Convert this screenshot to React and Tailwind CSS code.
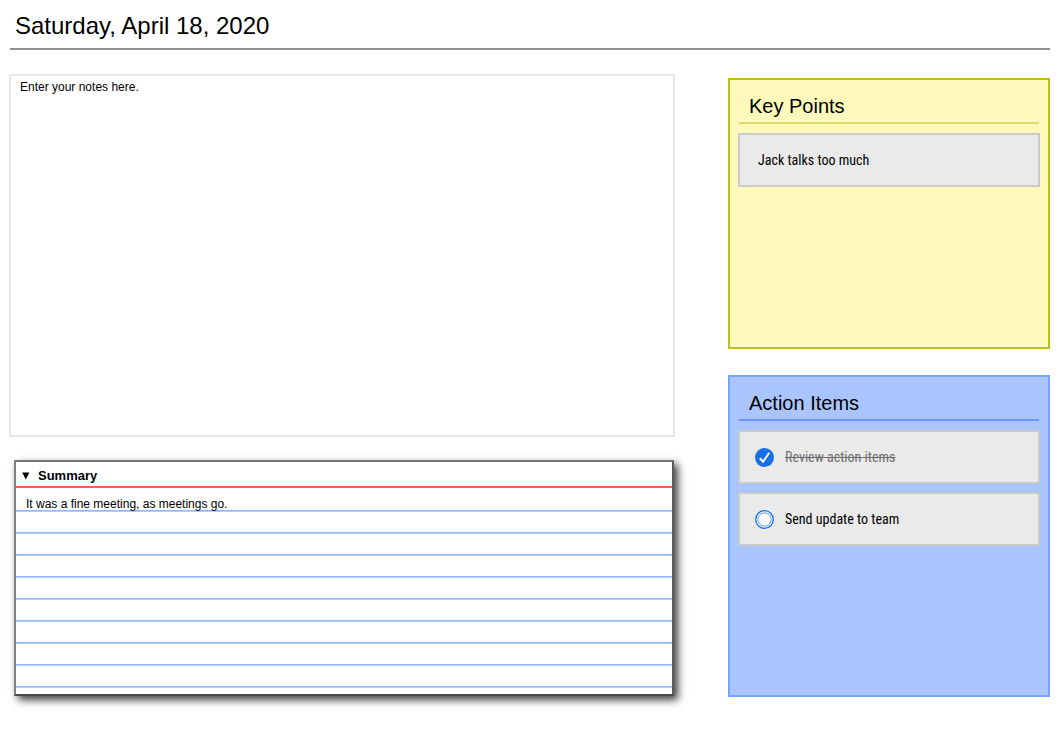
import { useState } from "react";

function Panel({ title, className, ruleClassName, children }) {
  return (
    <section className={`border-2 px-2 pt-[13px] ${className}`}>
      <h2 className={`mx-px border-b-2 pb-[3px] pl-[10px] text-[20px] leading-[26px] ${ruleClassName}`}>{title}</h2>
      <ul className="mt-[9px] flex flex-col gap-2">{children}</ul>
    </section>
  );
}

const itemClass =
  "flex h-[54px] items-center border-2 border-[#c9cacc] bg-[#eaeaea] font-['Roboto_Condensed','Open_Sans_Condensed',sans-serif] text-[14px] leading-[20px] font-normal";

function ActionItem({ id, text, initialDone }) {
  const [done, setDone] = useState(initialDone);
  return (
    <li className={`${itemClass} gap-[11px] pl-[15px]`}>
      <span className="grid size-[19px] shrink-0">
        <input
          id={id}
          type="checkbox"
          checked={done}
          onChange={(e) => setDone(e.target.checked)}
          className="col-start-1 row-start-1 size-[19px] appearance-none rounded-full"
        />
        <svg viewBox="0 0 19 19" className="pointer-events-none col-start-1 row-start-1 size-[19px]" aria-hidden="true">
          {done ? (
            <>
              <circle cx="9.5" cy="9.5" r="9.5" fill="#1670e4" />
              <path d="M4.8 10.2 8.1 13.7 14.2 4.8" fill="none" stroke="#fff" strokeWidth="2" />
            </>
          ) : (
            <>
              <circle cx="9.5" cy="9.5" r="8.8" fill="#fff" stroke="#1670e4" strokeWidth="1.3" />
              <circle cx="9.5" cy="9.5" r="6.7" fill="#fff" stroke="#1670e4" strokeWidth="0.7" />
            </>
          )}
        </svg>
      </span>
      <label htmlFor={id} className={done ? "text-[#6e6e6e] line-through" : "text-black"}>
        {text}
      </label>
    </li>
  );
}

export default function App() {
  return (
    <div className="bg-white pr-[11px] pb-9 pl-[9px] font-['Liberation_Sans',Arial,sans-serif] text-black">
      <header className="ml-px border-b-2 border-[#8f8f8f] pt-[11px] pb-[7px] pl-[5px]">
        <h1 className="text-[24px] leading-[30px]">Saturday, April 18, 2020</h1>
      </header>
      <main className="mt-6 flex items-start gap-[53px]">
        <div className="min-w-0 flex-1">
          <textarea
            aria-label="Notes"
            defaultValue="Enter your notes here."
            className="block h-[363px] w-full resize-none border-2 border-[#e8e8e8] px-[9px] py-[3px] text-[12px] leading-[16px] outline-none"
          />
          <details
            open
            className="mt-[23px] mr-px ml-[5px] border-2 border-t-[#767676] border-r-[#5a5a5a] border-b-[#4a4a4a] border-l-[#808080] bg-white shadow-[4px_4px_8px_rgba(0,0,0,0.75)]"
          >
            <summary className="flex cursor-pointer list-none items-center gap-2 border-b-2 border-[#fb5a52] pt-[6px] pb-[2px] pl-[6px] text-[13px] leading-[16px] font-bold">
              <svg viewBox="0 0 8 8" className="size-2" aria-hidden="true">
                <path d="M0.2 0.5H7.4L3.8 7.5Z" fill="#000" />
              </svg>
              Summary
            </summary>
            <textarea
              aria-label="Summary"
              defaultValue="It was a fine meeting, as meetings go."
              className="block h-[206px] w-full resize-none bg-[linear-gradient(#fff,#fff),linear-gradient(#93b6fb_1px,#b3ccfd_1px,#b3ccfd_2px,#fff_2px)] bg-[length:100%_2px,100%_22px] [background-repeat:no-repeat,repeat] px-[10px] pt-[5px] text-[12px] leading-[22px] outline-none"
            />
          </details>
        </div>
        <aside className="mt-1 flex w-[322px] shrink-0 flex-col gap-[26px]">
          <Panel title="Key Points" className="min-h-[271px] border-[#c1bd1b] bg-[#fdf9bb]" ruleClassName="border-[#dfdc6c]">
            <li className={`${itemClass} pl-[18px]`}>Jack talks too much</li>
          </Panel>
          <Panel title="Action Items" className="min-h-[322px] border-[#78a3fb] bg-[#aac4fe]" ruleClassName="border-[#6e93ff]">
            <ActionItem id="review" text="Review action items" initialDone={true} />
            <ActionItem id="send" text="Send update to team" initialDone={false} />
          </Panel>
        </aside>
      </main>
    </div>
  );
}
